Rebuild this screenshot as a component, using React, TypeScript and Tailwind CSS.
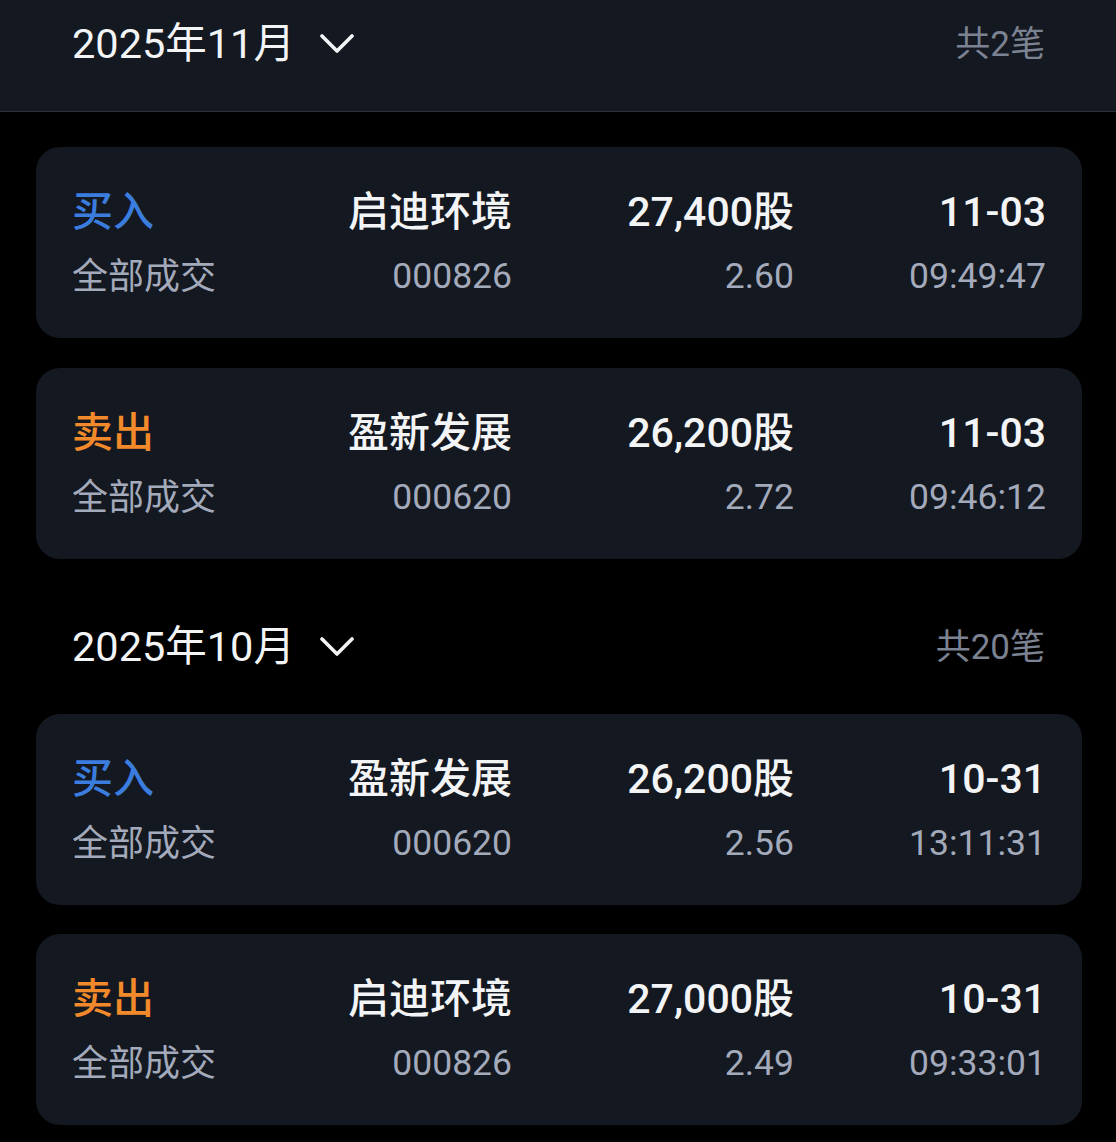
import React from "react";

type Trade = {
  side: "buy" | "sell";
  name: string;
  code: string;
  qty: string;
  price: string;
  date: string;
  time: string;
};

const FONT = { fontFamily: "Roboto, 'Noto Sans CJK SC', sans-serif" };

function Chevron() {
  return (
    <svg width="34" height="22" viewBox="0 0 34 22" className="ml-[25px]">
      <path d="M2 3 L17 18 L32 3" fill="none" stroke="#f3f4f6" strokeWidth="3.6" strokeLinecap="round" strokeLinejoin="round" />
    </svg>
  );
}

function MonthHeader({ month, count }: { month: string; count: string }) {
  return (
    <div className="flex h-[56px] items-center justify-between pl-[72px] pr-[71px]">
      <div className="flex items-center">
        <span className="text-[41.5px] leading-none text-[#f3f4f6]">{month}</span>
        <Chevron />
      </div>
      <span className="text-[35px] leading-none text-[#7b8292]">{count}</span>
    </div>
  );
}

function Card({ t }: { t: Trade }) {
  const sideColor = t.side === "buy" ? "text-[#3b7ddf]" : "text-[#f28a2c]";
  return (
    <div className="ml-[36px] mr-[34px] h-[191px] rounded-[24px] bg-[#141820] pl-[36px] pt-[37px]">
      <div className="flex h-[56px] items-center text-[41px] font-medium leading-none text-[#f3f4f6]">
        <div className={`w-[200px] ${sideColor}`}>{t.side === "buy" ? "买入" : "卖出"}</div>
        <div className="w-[240px] text-right">{t.name}</div>
        <div className="w-[282px] text-right">{t.qty}</div>
        <div className="w-[252px] text-right">{t.date}</div>
      </div>
      <div className="mt-[13px] flex h-[48px] items-center text-[36px] leading-none text-[#a3aabb]">
        <div className="w-[200px]">全部成交</div>
        <div className="w-[240px] text-right text-[35.5px]">{t.code}</div>
        <div className="w-[282px] text-right text-[35.5px]">{t.price}</div>
        <div className="w-[252px] text-right text-[35.5px]">{t.time}</div>
      </div>
    </div>
  );
}

const nov: Trade[] = [
  { side: "buy", name: "启迪环境", code: "000826", qty: "27,400股", price: "2.60", date: "11-03", time: "09:49:47" },
  { side: "sell", name: "盈新发展", code: "000620", qty: "26,200股", price: "2.72", date: "11-03", time: "09:46:12" },
];

const oct: Trade[] = [
  { side: "buy", name: "盈新发展", code: "000620", qty: "26,200股", price: "2.56", date: "10-31", time: "13:11:31" },
  { side: "sell", name: "启迪环境", code: "000826", qty: "27,000股", price: "2.49", date: "10-31", time: "09:33:01" },
];

export default function App() {
  return (
    <div className="h-[1142px] w-[1116px] overflow-hidden bg-black" style={FONT}>
      <div className="h-[112px] border-b border-[#2b303a] bg-[#141820] pt-[16px]">
        <MonthHeader month="2025年11月" count="共2笔" />
      </div>
      <div className="flex flex-col gap-[30px] pt-[35px]">
        {nov.map((t, i) => (
          <Card key={i} t={t} />
        ))}
      </div>
      <div className="pt-[60px] pb-[39px]">
        <MonthHeader month="2025年10月" count="共20笔" />
      </div>
      <div className="flex flex-col gap-[29px]">
        {oct.map((t, i) => (
          <Card key={i} t={t} />
        ))}
      </div>
    </div>
  );
}
